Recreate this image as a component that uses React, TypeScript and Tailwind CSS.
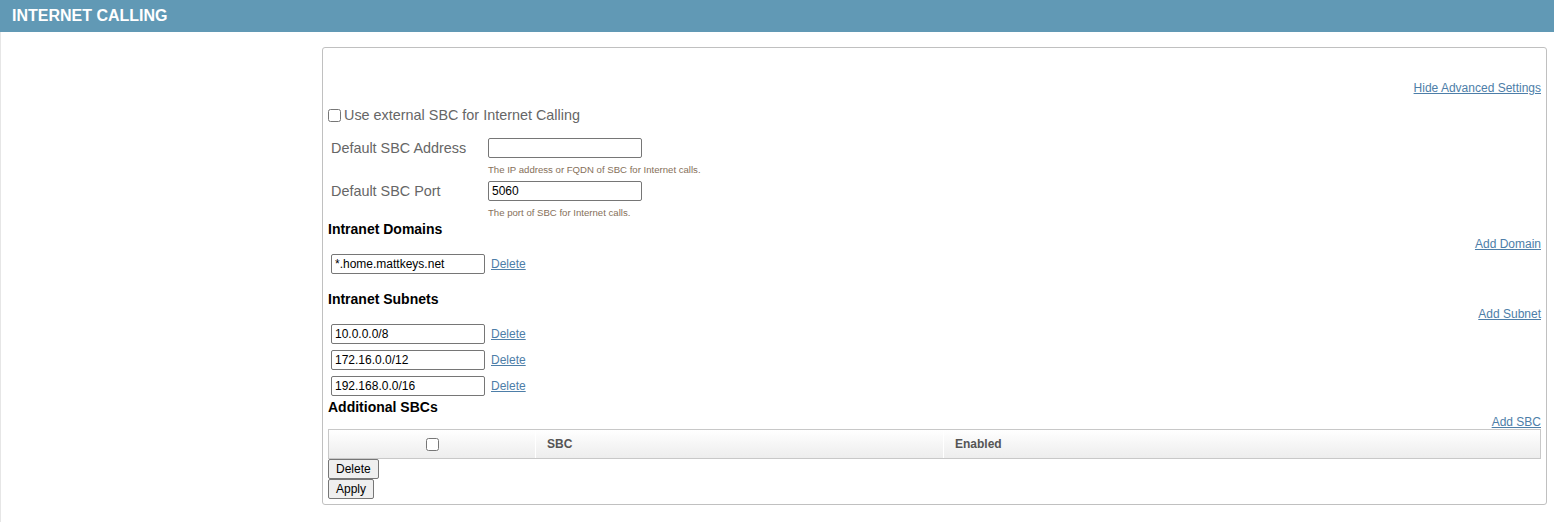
import React from 'react';

const font = { fontFamily: '"Liberation Sans", Arial, sans-serif' };

function LinkRow({ label }: { label: string }) {
  return (
    <div className="flex h-[14px] items-center justify-end">
      <a href="#" className="text-[12px] leading-[14px] text-[#4d7ea8] underline">
        {label}
      </a>
    </div>
  );
}

function EntryRow({ value, className = '' }: { value: string; className?: string }) {
  return (
    <div className={`flex h-[20px] items-center ${className}`}>
      <input
        readOnly
        value={value}
        className="ml-[3px] h-[20px] w-[154px] rounded-[2px] border border-[#767676] px-[3px] text-[12px] text-black outline-none"
      />
      <a href="#" className="ml-[6px] text-[12px] text-[#4d7ea8] underline">
        Delete
      </a>
    </div>
  );
}

function SectionTitle({ title, className = '' }: { title: string; className?: string }) {
  return <div className={`h-[16px] text-[14px] font-bold leading-[16px] text-black ${className}`}>{title}</div>;
}

export default function App() {
  return (
    <div className="min-h-[522px] bg-white" style={font}>
      <div className="flex h-[32px] items-center bg-[#6199b5] pl-[12px]">
        <span className="text-[16px] font-bold text-white">INTERNET CALLING</span>
      </div>
      <div className="min-h-[490px] border-l border-[#e6e6e6] pl-[321px] pr-[7px] pt-[15px]">
        <div className="rounded-[3px] border border-[#c0c0c0] px-[5px] pb-[5px] pt-[32px]">
          <div className="flex h-[16px] items-center justify-end">
            <a href="#" className="text-[12px] text-[#4d7ea8] underline">
              Hide Advanced Settings
            </a>
          </div>

          <label className="mt-[9px] flex h-[20px] items-center">
            <input type="checkbox" className="h-[13px] w-[13px]" />
            <span className="ml-[3px] pt-[2px] text-[14.4px] text-[#666]">Use external SBC for Internet Calling</span>
          </label>

          <div className="mt-[13px] flex h-[20px] items-center">
            <span className="w-[160px] pl-[3px] pt-[2px] text-[14.4px] text-[#666]">Default SBC Address</span>
            <input
              readOnly
              className="h-[20px] w-[154px] rounded-[2px] border border-[#767676] px-[3px] text-[12px] outline-none"
            />
          </div>
          <div className="mt-[6px] h-[12px] pl-[160px] text-[9.6px] leading-[12px] text-[#86705a]">
            The IP address or FQDN of SBC for Internet calls.
          </div>

          <div className="mt-[5px] flex h-[20px] items-center">
            <span className="w-[160px] pl-[3px] pt-[2px] text-[14.4px] text-[#666]">Default SBC Port</span>
            <input
              readOnly
              value="5060"
              className="h-[20px] w-[154px] rounded-[2px] border border-[#767676] px-[3px] text-[12px] text-black outline-none"
            />
          </div>
          <div className="mt-[6px] h-[12px] pl-[160px] text-[9.6px] leading-[12px] text-[#86705a]">
            The port of SBC for Internet calls.
          </div>

          <SectionTitle title="Intranet Domains" className="mt-[2px]" />
          <LinkRow label="Add Domain" />
          <EntryRow value="*.home.mattkeys.net" className="mt-[3px]" />

          <SectionTitle title="Intranet Subnets" className="mt-[17px]" />
          <LinkRow label="Add Subnet" />
          <div className="mt-[3px] flex flex-col gap-[6px]">
            <EntryRow value="10.0.0.0/8" />
            <EntryRow value="172.16.0.0/12" />
            <EntryRow value="192.168.0.0/16" />
          </div>

          <SectionTitle title="Additional SBCs" className="mt-[3px]" />
          <LinkRow label="Add SBC" />

          <div className="grid h-[30px] grid-cols-[206px_408px_1fr] border border-[#c8c8c8] bg-gradient-to-b from-white to-[#ededed] text-[12px] font-bold text-[#555]">
            <div className="flex items-center justify-center">
              <input type="checkbox" className="h-[13px] w-[13px]" />
            </div>
            <div className="flex items-center border-l border-white pl-[11px]">SBC</div>
            <div className="flex items-center border-l border-white pl-[11px]">Enabled</div>
          </div>

          <div className="flex flex-col items-start">
            <button className="h-[20px] rounded-[2px] border border-[#767676] bg-[#efefef] px-[7px] text-[12px] text-black">
              Delete
            </button>
            <button className="h-[20px] rounded-[2px] border border-[#767676] bg-[#efefef] px-[7px] text-[12px] text-black">
              Apply
            </button>
          </div>
        </div>
      </div>
    </div>
  );
}
